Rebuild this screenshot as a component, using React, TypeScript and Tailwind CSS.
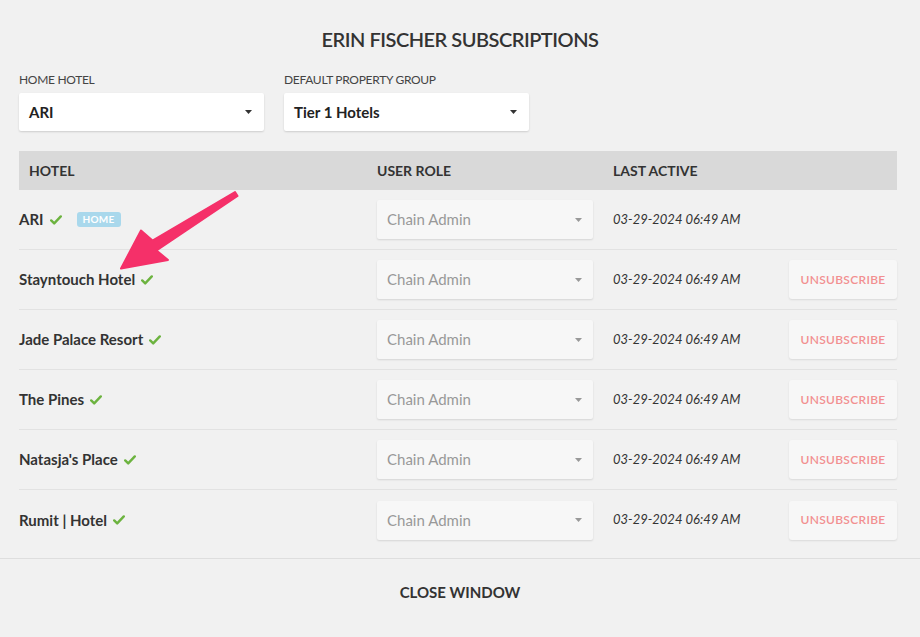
import React from "react";

const rows = [
    { name: "ARI", home: true },
    { name: "Stayntouch Hotel" },
    { name: "Jade Palace Resort" },
    { name: "The Pines" },
    { name: "Natasja's Place" },
    { name: "Rumit | Hotel" },
];

function Caret({ className = "" }: { className?: string }) {
    return (
        <svg width="7" height="4" viewBox="0 0 7 4" className={className}>
            <path d="M0 0h7L3.5 4z" fill="currentColor" />
        </svg>
    );
}

function Check() {
    return (
        <svg width="12" height="10" viewBox="0 0 12 10" className="text-[#6cb33f]">
            <path d="M1.2 5.4l3 3L10.8 1.4" fill="none" stroke="currentColor" strokeWidth="2.4" strokeLinecap="round" strokeLinejoin="round" />
        </svg>
    );
}

export default function App(): React.ReactElement {
    return (
        <div className="relative h-[637px] w-[920px] overflow-hidden bg-[#f1f1f1] font-['Lato','Open_Sans',sans-serif] text-[#333]">
            <h1 className="pt-[27px] text-center text-[20px] font-semibold leading-6 tracking-tight text-[#333]">
                ERIN FISCHER SUBSCRIPTIONS
            </h1>

            <div className="mt-[22px] flex gap-5 px-[19px]">
                <div className="w-[245px]">
                    <div className="text-[12px] leading-[14px] tracking-tight text-[#444]">HOME HOTEL</div>
                    <div className="mt-[6px] flex h-[38px] items-center justify-between rounded-[2px] bg-white pl-[10px] pr-[12px] shadow-[0_1px_2px_rgba(0,0,0,0.15)]">
                        <span className="text-[15px] font-bold text-[#222]">ARI</span>
                        <Caret className="text-[#333]" />
                    </div>
                </div>
                <div className="w-[245px]">
                    <div className="text-[12px] leading-[14px] tracking-tight text-[#444]">DEFAULT PROPERTY GROUP</div>
                    <div className="mt-[6px] flex h-[38px] items-center justify-between rounded-[2px] bg-white pl-[10px] pr-[12px] shadow-[0_1px_2px_rgba(0,0,0,0.15)]">
                        <span className="text-[15px] font-bold text-[#222]">Tier 1 Hotels</span>
                        <Caret className="text-[#333]" />
                    </div>
                </div>
            </div>

            <div className="ml-[19px] mt-5 w-[878px]">
                <div className="grid h-[39px] grid-cols-[358px_236px_1fr] items-center bg-[#d9d9d9] text-[14px] font-bold text-[#333]">
                    <div className="pl-[10px]">HOTEL</div>
                    <div>USER ROLE</div>
                    <div>LAST ACTIVE</div>
                </div>
                {rows.map((r, i) => (
                    <div
                        key={r.name}
                        className={`grid h-[60px] grid-cols-[358px_236px_1fr_auto] items-center ${i < rows.length - 1 ? "border-b border-[#e2e2e2]" : ""}`}
                    >
                        <div className="flex items-center gap-[6px] text-[15px] font-bold text-[#333]">
                            <span>{r.name}</span>
                            <Check />
                            {r.home && (
                                <span className="ml-[9px] rounded-[3px] bg-[#a9d8ec] px-[6px] text-[10px] leading-[15px] tracking-wide text-white">
                                    HOME
                                </span>
                            )}
                        </div>
                        <div>
                            <div className="flex h-[39px] w-[216px] items-center justify-between rounded-[2px] bg-[#f7f7f7] pl-[10px] pr-[11px] text-[15px] text-[#999] shadow-[0_1px_2px_rgba(0,0,0,0.12)]">
                                <span>Chain Admin</span>
                                <Caret className="text-[#999]" />
                            </div>
                        </div>
                        <div className="text-[13px] italic text-[#333]">03-29-2024 06:49 AM</div>
                        <div className="w-[108px]">
                            {!r.home && (
                                <button className="flex h-[39px] w-[108px] items-center justify-center rounded-[3px] bg-[#f7f7f7] text-[12px] font-semibold tracking-wide text-[#f28f90] shadow-[0_1px_2px_rgba(0,0,0,0.1)]">
                                    UNSUBSCRIBE
                                </button>
                            )}
                        </div>
                    </div>
                ))}
            </div>

            <div className="mt-[8px] border-t border-[#dedede] pt-[22px] text-center text-[15px] font-bold text-[#333]">
                CLOSE WINDOW
            </div>

            <svg className="pointer-events-none absolute left-0 top-0" width="920" height="637">
                <polygon
                    points="235,192 152.5,240.5 141,230.5 121,268.5 168,260 156.5,250.5 237.5,196"
                    fill="#f53069"
                    stroke="#f53069"
                    strokeWidth="2"
                    strokeLinejoin="round"
                />
            </svg>
        </div>
    );
}
